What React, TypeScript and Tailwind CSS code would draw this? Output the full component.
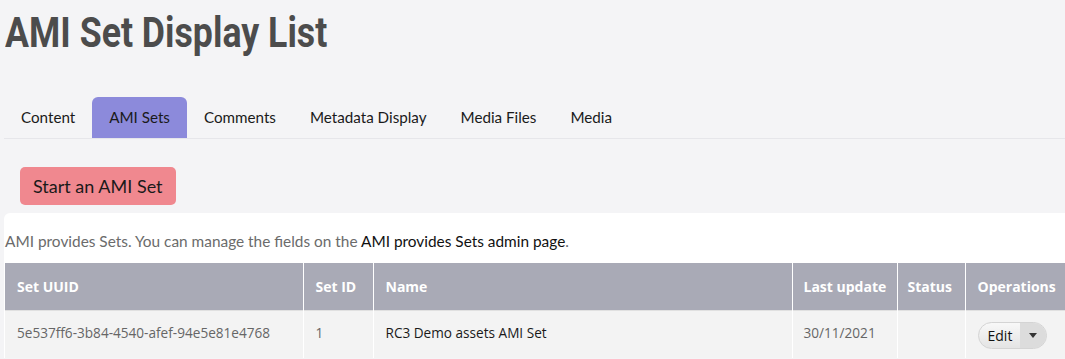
import React from "react";

const tabs = ["Content", "AMI Sets", "Comments", "Metadata Display", "Media Files", "Media"];

const App: React.FC = () => {
  return (
    <div className="min-h-[359px] w-[1065px] overflow-hidden bg-[#f4f4f6] font-['Lato',sans-serif]">
      <h1 className="origin-left scale-x-[0.85] pl-[6px] pt-[8px] font-['Roboto',sans-serif] text-[42px] leading-[49px] font-bold text-[#4c4c4c]">
        AMI Set Display List
      </h1>

      {/* tabs */}
      <div className="mt-[40px] ml-[4px] flex h-[42px] items-stretch border-b border-[#e6e6ea]">
        {tabs.map((t) => (
          <div
            key={t}
            className={`flex items-center px-[17px] text-[15.2px] text-[#1a1a1a] ${
              t === "AMI Sets" ? "rounded-t-[6px] bg-[#8c8adb]" : ""
            }`}
          >
            {t}
          </div>
        ))}
      </div>

      <div className="pl-[20px] pt-[28px]">
        <button className="h-[38px] rounded-[5px] bg-[#f0888f] px-[13px] text-[18px] text-[#1a1a1a]">
          Start an AMI Set
        </button>
      </div>

      <div className="mt-[8px] ml-[4px] rounded-tl-[6px] bg-white pt-[18px]">
        <p className="pl-[1px] text-[15.4px] leading-[21px] text-[#6b6b6b]">
          AMI provides Sets. You can manage the fields on the{" "}
          <span className="text-[#111]">AMI provides Sets admin page</span>.
        </p>

        <table className="mt-[11px] ml-[1px] w-[1060px] border-collapse font-['Open_Sans',sans-serif] text-[13.6px]">
          <thead>
            <tr className="h-[47px] bg-[#a9aab6] text-left text-[14px] font-bold text-white">
              <th className="w-[298px] border-r border-white pl-[12px]">Set UUID</th>
              <th className="w-[70px] border-r border-white pl-[12px]">Set ID</th>
              <th className="w-[419px] border-r border-white pl-[12px]">Name</th>
              <th className="w-[105px] border-r border-white pl-[11px]">Last update</th>
              <th className="w-[68px] border-r border-white pl-[10px]">Status</th>
              <th className="pl-[12px]">Operations</th>
            </tr>
          </thead>
          <tbody>
            <tr className="h-[48px] border-t border-[#e0e0e0] bg-[#f3f3f3] text-[#1a1a1a]">
              <td className="border-r border-white pl-[12px] pb-[3px] text-[#666]">5e537ff6-3b84-4540-afef-94e5e81e4768</td>
              <td className="border-r border-white pl-[12px] pb-[3px] text-[#666]">1</td>
              <td className="border-r border-white pl-[12px] pb-[3px]">RC3 Demo assets AMI Set</td>
              <td className="border-r border-white pl-[11px] pb-[3px] text-[#666]">30/11/2021</td>
              <td className="border-r border-white"></td>
              <td className="pl-[12px]">
                <div className="mt-[2px] inline-flex h-[27px] items-stretch overflow-hidden rounded-full border border-[#d4d4d4] bg-gradient-to-b from-[#f8f8f8] to-[#e4e4e4] text-[14px] text-[#111]">
                  <span className="flex items-center pl-[9px] pr-[8px]">Edit</span>
                  <span className="flex w-[26px] items-center justify-center bg-[#dcdcdc]">
                    <svg width="8" height="5" viewBox="0 0 8 5">
                      <path d="M0 0h8L4 5z" fill="#333" />
                    </svg>
                  </span>
                </div>
              </td>
            </tr>
          </tbody>
        </table>
      </div>
    </div>
  );
};

export default App;
